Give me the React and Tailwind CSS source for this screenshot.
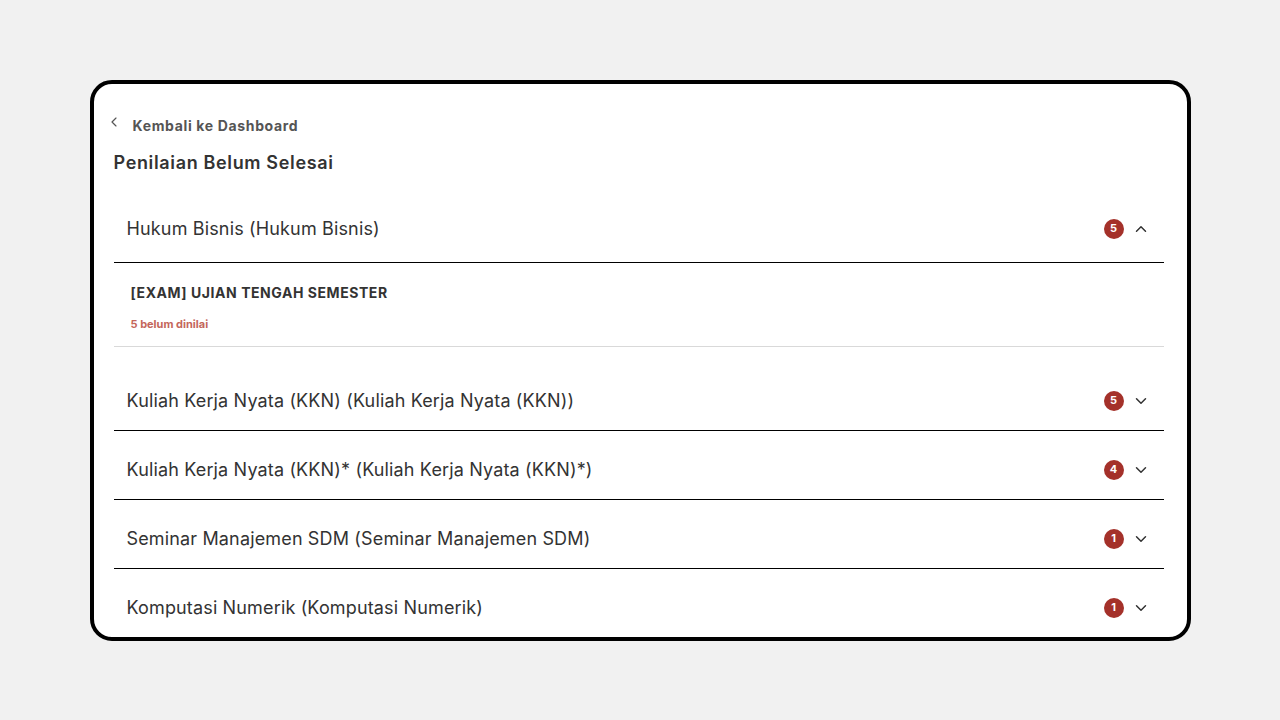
import { ChevronDown, ChevronLeft, ChevronUp } from 'lucide-react';

const courses = [
  {
    name: 'Hukum Bisnis (Hukum Bisnis)',
    count: 5,
    open: true,
    tasks: [{ title: '[EXAM] UJIAN TENGAH SEMESTER', pending: 5 }],
  },
  { name: 'Kuliah Kerja Nyata (KKN) (Kuliah Kerja Nyata (KKN))', count: 5 },
  { name: 'Kuliah Kerja Nyata (KKN)* (Kuliah Kerja Nyata (KKN)*)', count: 4 },
  { name: 'Seminar Manajemen SDM (Seminar Manajemen SDM)', count: 1 },
  { name: 'Komputasi Numerik (Komputasi Numerik)', count: 1 },
];

function CourseRow({ course }) {
  return (
    <div>
      <div
        className={
          'flex items-center justify-between border-b border-black pl-[13px] pr-[14px] pt-[26px] ' +
          (course.open ? 'pb-[19px]' : 'pb-[15px]')
        }
      >
        <span className="text-[18px] leading-[28px] tracking-[0.15px] text-[#333]">{course.name}</span>
        <div className="flex items-center gap-[8px]">
          <span className="flex h-[20px] w-[20px] items-center justify-center rounded-full bg-[#a4312a] text-[11px] font-bold text-white">
            {course.count}
          </span>
          {course.open ? (
            <ChevronUp className="h-[18px] w-[18px] text-[#333]" strokeWidth={2} />
          ) : (
            <ChevronDown className="h-[18px] w-[18px] text-[#333]" strokeWidth={2} />
          )}
        </div>
      </div>
      {course.open && (
        <div className="mb-[14px]">
          {course.tasks.map((t) => (
            <div key={t.title} className="border-b border-[#d9d9d9] pl-[17px] pt-[21px] pb-[14px]">
              <p className="text-[14px] font-bold uppercase leading-[18px] tracking-[0.55px] text-[#333]">
                {t.title}
              </p>
              <p className="mt-[14px] text-[11px] font-bold leading-[16px] text-[#c4665b]">
                {t.pending} belum dinilai
              </p>
            </div>
          ))}
        </div>
      )}
    </div>
  );
}

export default function App() {
  return (
    <div className="flex h-[720px] w-full items-center justify-center bg-[#f1f1f1] font-['Inter',sans-serif]">
      <div className="h-[561px] w-[1101px] overflow-hidden rounded-[22px] border-4 border-black bg-white">
        <div className="pl-5 pr-[23px] pt-[32px]">
          <div className="flex items-center gap-[11px] text-[#555]">
            <ChevronLeft className="-ml-[8px] -mt-[8px] h-[16px] w-[16px]" strokeWidth={1.75} />
            <span className="text-[14px] font-bold leading-[20px] tracking-[0.65px]">Kembali ke Dashboard</span>
          </div>
          <h1 className="mt-[14px] text-[18px] font-semibold leading-[26px] tracking-[0.65px] text-[#333]">
            Penilaian Belum Selesai
          </h1>
          <div className="mt-[13px]">
            {courses.map((c, i) => (
              <div key={c.name} className={i > 1 ? '-mt-px' : ''}>
                <CourseRow course={c} />
              </div>
            ))}
          </div>
        </div>
      </div>
    </div>
  );
}
